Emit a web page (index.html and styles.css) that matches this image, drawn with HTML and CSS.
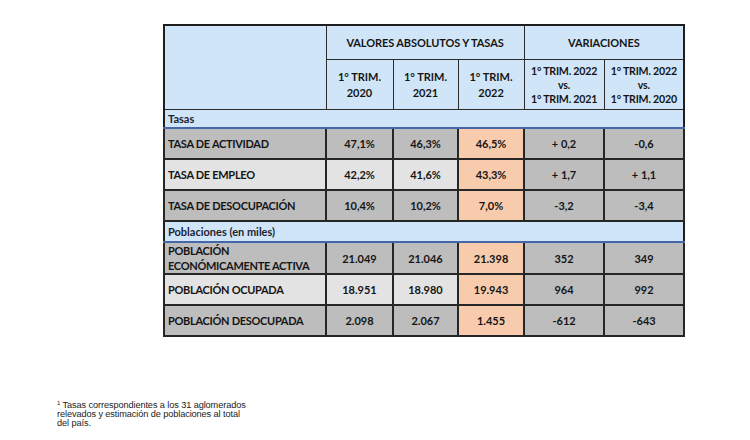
FILE: index.html
```html
<!DOCTYPE html>
<html lang="es">
<head>
<meta charset="utf-8">
<link rel="stylesheet" href="styles.css">
</head>
<body>
<div class="page">
  <table class="tbl">
    <colgroup>
      <col class="c-label"><col class="c-val"><col class="c-val2"><col class="c-val3"><col class="c-var"><col class="c-var">
    </colgroup>
    <thead>
      <tr class="h1">
        <th class="corner" rowspan="2"></th>
        <th colspan="3">VALORES ABSOLUTOS Y TASAS</th>
        <th colspan="2">VARIACIONES</th>
      </tr>
      <tr class="h2">
        <th>1° TRIM.<br>2020</th>
        <th>1° TRIM.<br>2021</th>
        <th>1° TRIM.<br>2022</th>
        <th class="vs">1° TRIM. 2022<br>vs.<br>1° TRIM. 2021</th>
        <th class="vs">1° TRIM. 2022<br>vs.<br>1° TRIM. 2020</th>
      </tr>
    </thead>
    <tbody>
      <tr class="sec s1"><td colspan="6">Tasas</td></tr>
      <tr class="row dark">
        <td class="lbl">TASA DE ACTIVIDAD</td><td>47,1%</td><td>46,3%</td><td class="hl">46,5%</td><td class="g">+ 0,2</td><td class="g">-0,6</td>
      </tr>
      <tr class="row light">
        <td class="lbl">TASA DE EMPLEO</td><td>42,2%</td><td>41,6%</td><td class="hl">43,3%</td><td class="g">+ 1,7</td><td class="g">+ 1,1</td>
      </tr>
      <tr class="row dark">
        <td class="lbl">TASA DE DESOCUPACIÓN</td><td>10,4%</td><td>10,2%</td><td class="hl">7,0%</td><td class="g">-3,2</td><td class="g">-3,4</td>
      </tr>
      <tr class="sec s2"><td colspan="6">Poblaciones (en miles)</td></tr>
      <tr class="row dark">
        <td class="lbl two">POBLACIÓN<br>ECONÓMICAMENTE ACTIVA</td><td>21.049</td><td>21.046</td><td class="hl">21.398</td><td class="g">352</td><td class="g">349</td>
      </tr>
      <tr class="row light">
        <td class="lbl">POBLACIÓN OCUPADA</td><td>18.951</td><td>18.980</td><td class="hl">19.943</td><td class="g">964</td><td class="g">992</td>
      </tr>
      <tr class="row dark">
        <td class="lbl">POBLACIÓN DESOCUPADA</td><td>2.098</td><td>2.067</td><td class="hl">1.455</td><td class="g">-612</td><td class="g">-643</td>
      </tr>
    </tbody>
  </table>
  <p class="note"><sup>1</sup> Tasas correspondientes a los 31 aglomerados<br>relevados y estimación de poblaciones al total<br>del país.</p>
</div>
</body>
</html>
```

FILE: styles.css
```css
html, body {
  margin: 0;
  padding: 0;
  background: #ffffff;
}

.page {
  width: 750px;
  height: 440px;
  padding-top: 24px;
  box-sizing: border-box;
}

.tbl {
  margin-left: 163px;
  border-collapse: collapse;
  table-layout: fixed;
  width: 521px;
  font-family: "Lato", "Noto Sans", sans-serif;
  font-weight: 700;
  font-size: 11px;
  color: #151515;
  border: 2px solid #1e1e1e;
}

.c-label { width: 162px; }
.c-val { width: 67px; }
.c-val2 { width: 65px; }
.c-val3 { width: 66px; }
.c-var { width: 80px; }

.tbl th {
  background: #d1e5f8;
  border: 1.5px solid #2a2a2a;
  text-align: center;
  font-weight: 700;
  padding: 0;
}

.h1 th {
  height: 33px;
  font-size: 11px;
  letter-spacing: -0.1px;
}

.h2 th {
  height: 49px;
  line-height: 16px;
  font-size: 11px;
}

.h2 th.vs {
  line-height: 14px;
  font-size: 10.6px;
  letter-spacing: -0.2px;
}

.sec td {
  background: #d1e5f8;
  padding: 0 0 0 3px;
  text-align: left;
  border-left: 2px solid #1e1e1e;
  border-right: 2px solid #1e1e1e;
  border-top: 1.5px solid #2a2a2a;
  border-bottom: 2px solid #4566a8;
  font-size: 11px;
  color: #1a2433;
}

.s1 td { height: 17px; }
.s2 td { height: 19px; }

.row td {
  height: 29px;
  padding: 0;
  text-align: center;
  border: 2px solid #262626;
  font-size: 11px;
}

.row.dark td { background: #bdbdbd; }
.row.light td { background: #e3e3e3; }
.row td.g { background: #bdbdbd; }
.row td.hl { background: #f8cbac; }

.row td.lbl {
  text-align: left;
  padding-left: 3px;
  letter-spacing: -0.3px;
}

.row td.two {
  line-height: 15px;
}

.note {
  margin: 64px 0 0 57px;
  font-family: "Liberation Sans", Arial, sans-serif;
  font-size: 9.2px;
  line-height: 9px;
  letter-spacing: -0.1px;
  color: #222222;
}

.note sup {
  font-size: 6px;
  vertical-align: 3px;
  line-height: 0;
}
```
